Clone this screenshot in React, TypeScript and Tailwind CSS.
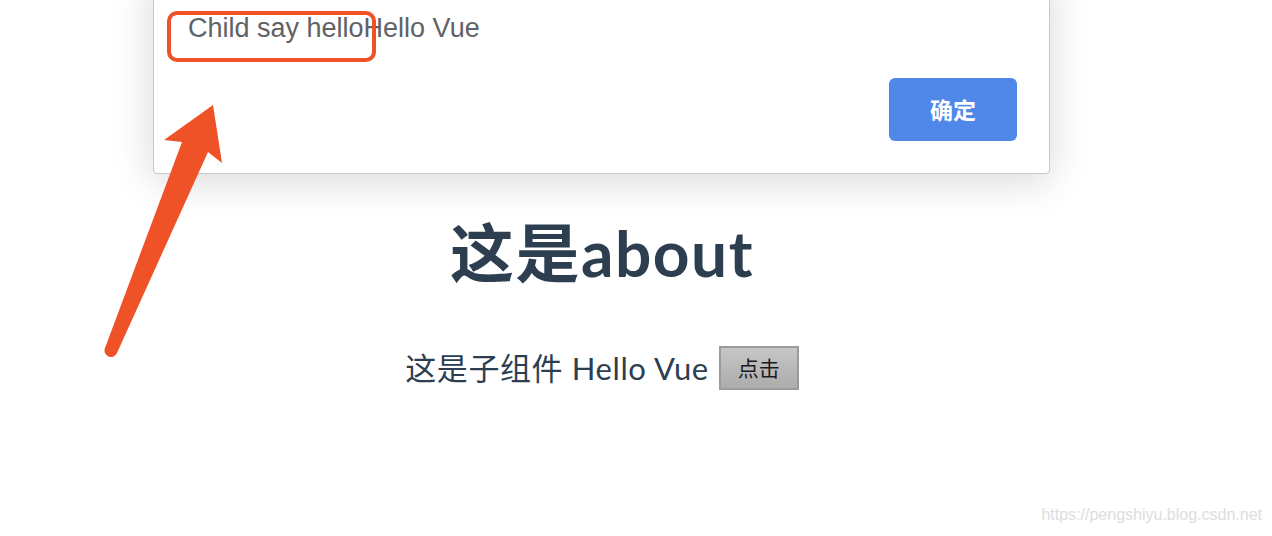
import React from "react";

const cjk = "font-['Lato','Noto_Sans_CJK_SC',sans-serif]";

function Arrow() {
  // hand-drawn style annotation arrow pointing at the dialog text
  return (
    <svg
      className="absolute left-[100px] top-[100px]"
      width="130"
      height="260"
      viewBox="0 0 130 260"
    >
      <path
        d="M113 5 L64 40 L82 42 L5 248 A6.2 6.2 0 0 0 17 253 L108 52 L122 63 Z"
        fill="#F05228"
      />
    </svg>
  );
}

export default function App() {
  return (
    <div className="relative w-[1272px] h-[536px] overflow-hidden bg-white">
      {/* page content */}
      <div className="w-[1204px] flex flex-col items-center pt-[213px] text-[#2c3e50]">
        <h1 className={`${cjk} text-[64px] leading-[80px] font-bold tracking-[1.5px]`}>这是about</h1>
        <div className="mt-[53px] flex items-center gap-[10px]">
          <span className={`${cjk} text-[31px] leading-[44px] tracking-[0.6px]`}>这是子组件 Hello Vue</span>
          <button className="w-[80px] h-[44px] border-2 border-[#9b9b9b] bg-gradient-to-b from-[#c6c6c6] to-[#acacac] text-[21px] text-[#1a1a1a] font-['Noto_Sans_CJK_SC',sans-serif]">
            点击
          </button>
        </div>
      </div>

      {/* dialog */}
      <div className="absolute left-[153px] top-[-30px] w-[897px] pt-[41px] pb-[32px] pl-[34px] pr-[32px] bg-white border border-[#c9c9c9] rounded-[4px] shadow-[0_6px_40px_rgba(0,0,0,0.16)]">
        <p className="font-['Liberation_Sans',Arial,sans-serif] text-[27px] leading-[32px] text-[#606266]">
          Child say helloHello Vue
        </p>
        <div className="mt-[34px] flex justify-end">
          <button className="w-[128px] h-[63px] rounded-[6px] bg-[#5088EA] text-white text-[23px] font-bold font-['Noto_Sans_CJK_SC',sans-serif]">
            确定
          </button>
        </div>
      </div>

      {/* annotation */}
      <div className="absolute left-[167px] top-[11px] w-[209px] h-[51px] border-[4.5px] border-[#EE5226] rounded-[10px]" />
      <Arrow />

      <div className="absolute right-[10px] bottom-[9px] font-['Liberation_Sans',Arial,sans-serif] text-[16px] text-[#dddddd]">
        https://pengshiyu.blog.csdn.net
      </div>
    </div>
  );
}
